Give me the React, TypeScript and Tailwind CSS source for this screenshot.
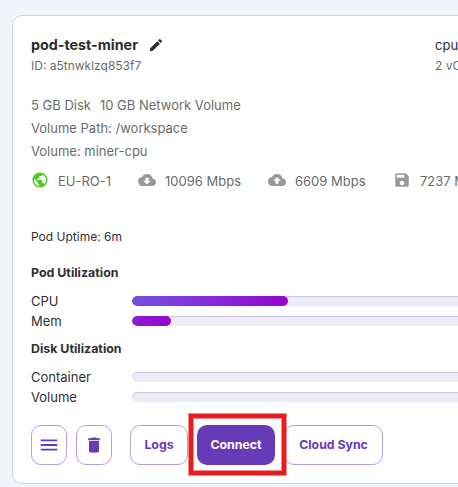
import type { ReactNode } from 'react';
import {
  MdCloudDownload,
  MdCloudUpload,
  MdDelete,
  MdEdit,
  MdMenu,
  MdPublic,
  MdSave,
} from 'react-icons/md';

const wideFill = 'bg-[linear-gradient(135deg,#7351df,#9704cb)]';
const shortFill = 'bg-[linear-gradient(135deg,#8a20d2,#9704cb)]';

function Meter({ label, value, fill = wideFill }: { label: string; value: number; fill?: string }) {
  return (
    <div className="flex h-5 items-center">
      <span className="w-[101px] shrink-0 pt-px text-[13px] text-[#303030]">{label}</span>
      <div className="h-2.5 w-[520px] shrink-0 overflow-hidden rounded-full bg-[#eeeaf8] shadow-[inset_0_1px_1px_rgba(80,50,140,0.2)]">
        {value > 0 && <div className={`h-full rounded-full ${fill}`} style={{ width: `${value}%` }} />}
      </div>
    </div>
  );
}

function Stat({ icon, text, className }: { icon: ReactNode; text: string; className: string }) {
  return (
    <div className={`flex shrink-0 items-center ${className}`}>
      <span className="w-[27px] shrink-0 pb-0.5">{icon}</span>
      <span className="pt-0.5">{text}</span>
    </div>
  );
}

const outline =
  'flex h-10 shrink-0 items-center justify-center rounded-[10px] border border-[#b39ddb] text-[#673ab7]';

export default function App() {
  return (
    <div className="h-[487px] w-[458px] overflow-hidden bg-[#f1f4f9] pt-[15px] pl-3 font-['Inter','Liberation_Sans',sans-serif] whitespace-nowrap">
      <div className="h-[469px] w-[700px] rounded-[10px] border border-[#d0d3d8] bg-white pt-[17px] pl-[18px] text-[13px] text-[#6b6b6b]">
        <div className="flex">
          <div className="w-[404px] shrink-0">
            <div className="flex h-6 items-center text-[#2b2b2b]">
              <h1 className="w-[117px] text-[14.3px] font-bold">pod-test-miner</h1>
              <MdEdit size={16} />
            </div>
            <p className="h-[18px] text-[12px] leading-[18px]">ID: a5tnwklzq853f7</p>
          </div>
          <div>
            <p className="h-6 text-[13px] leading-6 text-[#2b2b2b]">cpu3c</p>
            <p className="h-[18px] text-[12px] leading-[18px]">2 vCPU</p>
          </div>
        </div>

        <div className="mt-[19px] leading-[23px]">
          <p className="flex gap-[9px]">
            <span>5 GB Disk</span>
            <span>10 GB Network Volume</span>
          </p>
          <p>Volume Path: /workspace</p>
          <p>Volume: miner-cpu</p>
        </div>

        <div className="mt-1.5 flex h-6 items-center">
          <Stat className="w-[107px]" icon={<MdPublic size={18} color="#52cb1f" />} text="EU-RO-1" />
          <Stat className="w-[130px]" icon={<MdCloudDownload size={18} color="#999999" />} text="10096 Mbps" />
          <Stat className="w-[125px]" icon={<MdCloudUpload size={18} color="#999999" />} text="6609 Mbps" />
          <Stat className="w-[130px]" icon={<MdSave size={18} color="#999999" />} text="7237 MBps" />
        </div>

        <p className="mt-[34px] h-5 text-[12px] leading-5 text-[#303030]">Pod Uptime: 6m</p>

        <h2 className="mt-4 mb-2 h-5 text-[12.4px] leading-5 font-bold text-[#303030]">Pod Utilization</h2>
        <Meter label="CPU" value={30} />
        <Meter label="Mem" value={7.5} fill={shortFill} />

        <h2 className="my-2 h-5 text-[12.4px] leading-5 font-bold text-[#303030]">Disk Utilization</h2>
        <Meter label="Container" value={0} />
        <Meter label="Volume" value={0} />

        <div className="mt-[18px] flex text-[12.3px] font-bold">
          <button className={`${outline} w-9`} aria-label="Menu">
            <MdMenu size={22} />
          </button>
          <button className={`${outline} ml-[9px] w-9`} aria-label="Delete">
            <MdDelete size={20} />
          </button>
          <button className={`${outline} ml-[18px] w-[58px]`}>Logs</button>
          <div className="relative ml-[9px]">
            <button className="h-10 w-[78px] rounded-[10px] bg-[#673ab7] text-white">Connect</button>
            <div className="absolute -top-[11px] -left-2 z-10 h-[61px] w-[97px] border-4 border-[#e81c1c] shadow-[0_0_0_1px_rgba(232,28,28,0.5),inset_0_0_0_1px_rgba(232,28,28,0.5)]" />
          </div>
          <button className={`${outline} ml-[9px] w-[99px]`}>Cloud Sync</button>
        </div>
      </div>
    </div>
  );
}
